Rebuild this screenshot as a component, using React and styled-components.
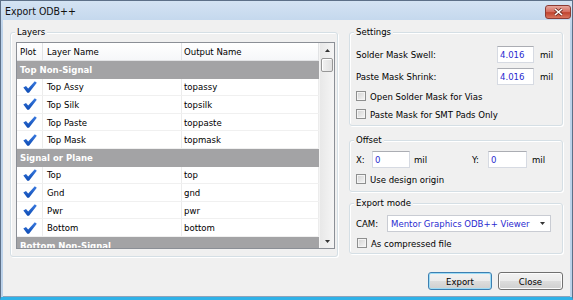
import React from 'react';
import styled, { createGlobalStyle } from 'styled-components';

const GlobalStyle = createGlobalStyle`
  html, body { margin: 0; padding: 0; background: #f0f0f0; }
  body {
    font-family: "DejaVu Sans Condensed", "Liberation Sans", sans-serif;
    font-size: 9.5px;
    color: #000;
  }
  #root { width: 573px; height: 300px; }
`;

const Window = styled.div`
  box-sizing: border-box;
  width: 573px;
  height: 300px;
  display: flex;
  flex-direction: column;
  background: linear-gradient(#d4e3f3, #bcd2ea 30px);
  border: 1px solid #5d7088;
  border-bottom: 3px solid #2fb2e8;
  overflow: hidden;
`;

const TitleBar = styled.div`
  height: 19px;
  display: flex;
  align-items: center;
  justify-content: space-between;
  padding: 0 1px 0 4px;
  flex-shrink: 0;
`;

const Title = styled.span`
  font-family: "DejaVu Sans Condensed", "Liberation Sans", sans-serif;
  font-size: 10.5px;
  color: #111;
`;

const CloseBtn = styled.div`
  width: 26px;
  height: 14px;
  margin-top: 2px;
  box-sizing: border-box;
  border: 1px solid #8c3b34;
  border-radius: 3px;
  background: linear-gradient(#e6a79e, #d46a5c 50%, #c0432f 55%, #d9755f);
  display: flex;
  align-items: center;
  justify-content: center;
`;

const Client = styled.div`
  flex: 1;
  margin: 0 2px;
  background: #f0f0f0;
  border-bottom: 1px solid #8fa3ba;
  display: flex;
  flex-direction: column;
  padding: 12px 7px 0 7px;
`;

const Main = styled.div`
  display: flex;
  gap: 11px;
`;

const RightColumn = styled.div`
  width: 214px;
  display: flex;
  flex-direction: column;
`;

const GroupBox = styled.div`
  position: relative;
  box-sizing: border-box;
  border: 1px solid #d5dfe5;
  border-radius: 3px;
  box-shadow: inset 1px 1px 0 #fff, 1px 1px 0 #fff;
  width: ${p => p.$w || 'auto'};
  height: ${p => p.$h || 'auto'};
  margin-top: ${p => p.$mt || 0}px;
  padding: ${p => p.$pad || '0'};
`;

const Caption = styled.span`
  position: absolute;
  top: -7px;
  left: 4px;
  padding: 0 2px;
  line-height: 12px;
  background: #f0f0f0;
`;

/* list view */
const List = styled.div`
  box-sizing: border-box;
  height: 100%;
  display: flex;
  border: 1px solid #8b8f96;
  background: #fff;
`;

const ListBody = styled.div`
  flex: 1;
  overflow: hidden;
`;

const cols = '26px 139px 1fr';

const HeaderRow = styled.div`
  display: grid;
  grid-template-columns: ${cols};
  height: 17px;
  background: linear-gradient(#ffffff, #f6f7f9);
  border-bottom: 1px solid #e2e3e5;
`;

const HeaderCell = styled.div`
  padding-left: ${p => p.$pl || 3}px;
  line-height: 17px;
  border-right: 1px solid #e2e3e5;
  white-space: nowrap;
`;

const GroupRow = styled.div`
  height: 17.6px;
  line-height: 17.6px;
  padding-left: 3px;
  background: #a3a3a5;
  color: #fff;
  font-weight: bold;
  white-space: nowrap;
`;

const DataRow = styled.div`
  display: grid;
  grid-template-columns: ${cols};
  height: 17.6px;
  box-sizing: border-box;
  border-bottom: 1px solid #f0f0f0;
`;

const Cell = styled.div`
  display: flex;
  align-items: center;
  justify-content: ${p => (p.$center ? 'center' : 'flex-start')};
  padding-left: ${p => (p.$center ? 0 : p.$pl || 3)}px;
  border-right: 1px solid #ececec;
  white-space: nowrap;
`;

const ScrollBar = styled.div`
  width: 14px;
  display: flex;
  flex-direction: column;
  background: linear-gradient(90deg, #e8e8e8, #f5f5f5);
  border-left: 1px solid #f4f4f4;
`;

const ScrollArrow = styled.div`
  height: 14px;
  display: flex;
  align-items: center;
  justify-content: center;
`;

const Thumb = styled.div`
  height: 14px;
  margin: 1px 1px 0;
  box-sizing: border-box;
  border: 1px solid #979797;
  border-radius: 2px;
  background: linear-gradient(90deg, #f2f2f2, #e1e1e1);
  box-shadow: inset 1px 1px 0 #fff;
`;

const Track = styled.div`
  flex: 1;
`;

/* settings */
const FieldRow = styled.div`
  display: flex;
  align-items: center;
  height: ${p => p.$h || 22}px;
`;

const Label = styled.span`
  width: ${p => p.$w}px;
  flex-shrink: 0;
  white-space: nowrap;
`;

const TextBox = styled.input`
  box-sizing: border-box;
  width: ${p => p.$w}px;
  height: 17px;
  margin: 0;
  padding: 0 2px;
  font: inherit;
  color: #2a2ad0;
  background: #fff;
  border: 1px solid #d6dae2;
  border-top-color: #abadb3;
  outline: none;
`;

const Unit = styled.span`
  margin-left: ${p => p.$ml || 6}px;
  width: ${p => p.$w || 'auto'};
  flex-shrink: 0;
`;

const CheckRow = styled.div`
  display: flex;
  align-items: center;
  gap: 4px;
  height: 18px;
  padding-left: ${p => p.$pl || 0}px;
`;

const CheckBox = styled.span`
  width: 10px;
  height: 10px;
  box-sizing: border-box;
  border: 1px solid #8e8f8f;
  background: linear-gradient(135deg, #d2d2d2, #f6f6f6);
  box-shadow: inset 0 0 0 1px #f4f4f4;
`;

const Select = styled.div`
  box-sizing: border-box;
  width: 164px;
  height: 17px;
  display: flex;
  align-items: center;
  justify-content: space-between;
  padding: 0 5px 0 3px;
  background: #fff;
  border: 1px solid #c9ccd3;
  color: #2a2ad0;
`;

const Footer = styled.div`
  display: flex;
  justify-content: flex-end;
  gap: 6px;
  margin-top: 15px;
`;

const Button = styled.div`
  box-sizing: border-box;
  width: ${p => p.$w}px;
  height: 18px;
  display: flex;
  align-items: center;
  justify-content: center;
  border: 1px solid ${p => (p.$default ? '#3c7fb1' : '#707070')};
  border-radius: 3px;
  background: linear-gradient(#f2f2f2, #ebebeb 50%, #dddddd 50%, #cfcfcf);
  box-shadow: inset 0 0 0 1px ${p => (p.$default ? '#9ddcf6' : '#fcfcfc')};
`;

const Check = () => (
  <svg width="14" height="12" viewBox="0 0 14 12">
    <defs>
      <linearGradient id="ck" x1="0" y1="0" x2="0" y2="1">
        <stop offset="0" stopColor="#3b7be0" />
        <stop offset="1" stopColor="#0d4bb4" />
      </linearGradient>
    </defs>
    <path d="M0.3 6.5 L3 4.9 L5.2 7.6 L11.8 0.2 L13.8 1.8 L6 11.8 L4.3 11.8 Z" fill="url(#ck)" />
  </svg>
);

const Arrow = ({ down }) => (
  <svg width="5" height="3" viewBox="0 0 5 3">
    <path d={down ? 'M0 0 H5 L2.5 3 Z' : 'M0 3 H5 L2.5 0 Z'} fill="#333" />
  </svg>
);

const groups = [
  {
    name: 'Top Non-Signal',
    layers: [
      ['Top Assy', 'topassy'],
      ['Top Silk', 'topsilk'],
      ['Top Paste', 'toppaste'],
      ['Top Mask', 'topmask'],
    ],
  },
  {
    name: 'Signal or Plane',
    layers: [
      ['Top', 'top'],
      ['Gnd', 'gnd'],
      ['Pwr', 'pwr'],
      ['Bottom', 'bottom'],
    ],
  },
  { name: 'Bottom Non-Signal', layers: [] },
];

export default function App() {
  return (
    <>
      <GlobalStyle />
      <Window>
        <TitleBar>
          <Title>Export ODB++</Title>
          <CloseBtn>
            <svg width="9" height="8" viewBox="0 0 9 8">
              <path d="M1 1 L8 7 M8 1 L1 7" stroke="#6b2a22" strokeWidth="3" />
              <path d="M1 1 L8 7 M8 1 L1 7" stroke="#fff" strokeWidth="1.6" />
            </svg>
          </CloseBtn>
        </TitleBar>
        <Client>
          <Main>
            <GroupBox $w="328px" $h="225px" $pad="9px 2px 7px 5px">
              <Caption>Layers</Caption>
              <List>
                <ListBody>
                  <HeaderRow>
                    <HeaderCell>Plot</HeaderCell>
                    <HeaderCell $pl={4}>Layer Name</HeaderCell>
                    <HeaderCell $pl={2}>Output Name</HeaderCell>
                  </HeaderRow>
                  {groups.map(g => (
                    <React.Fragment key={g.name}>
                      <GroupRow>{g.name}</GroupRow>
                      {g.layers.map(([name, out]) => (
                        <DataRow key={name}>
                          <Cell $center><Check /></Cell>
                          <Cell $pl={4}>{name}</Cell>
                          <Cell $pl={2}>{out}</Cell>
                        </DataRow>
                      ))}
                    </React.Fragment>
                  ))}
                </ListBody>
                <ScrollBar>
                  <ScrollArrow><Arrow /></ScrollArrow>
                  <Thumb />
                  <Track />
                  <ScrollArrow><Arrow down /></ScrollArrow>
                </ScrollBar>
              </List>
            </GroupBox>

            <RightColumn>
              <GroupBox $pad="10px 0 2px 6px">
                <Caption>Settings</Caption>
                <FieldRow>
                  <Label $w={141}>Solder Mask Swell:</Label>
                  <TextBox $w={37} readOnly value="4.016" />
                  <Unit>mil</Unit>
                </FieldRow>
                <FieldRow>
                  <Label $w={141}>Paste Mask Shrink:</Label>
                  <TextBox $w={37} readOnly value="4.016" />
                  <Unit>mil</Unit>
                </FieldRow>
                <CheckRow>
                  <CheckBox />
                  <span>Open Solder Mask for Vias</span>
                </CheckRow>
                <CheckRow>
                  <CheckBox />
                  <span>Paste Mask for SMT Pads Only</span>
                </CheckRow>
              </GroupBox>

              <GroupBox $mt={14} $pad="8px 0 3px 6px">
                <Caption>Offset</Caption>
                <FieldRow $h={21}>
                  <Label $w={16}>X:</Label>
                  <TextBox $w={38} readOnly value="0" />
                  <Unit $ml={4} $w="58px">mil</Unit>
                  <Label $w={16}>Y:</Label>
                  <TextBox $w={39} readOnly value="0" />
                  <Unit $ml={5}>mil</Unit>
                </FieldRow>
                <CheckRow>
                  <CheckBox />
                  <span>Use design origin</span>
                </CheckRow>
              </GroupBox>

              <GroupBox $mt={11} $pad="8px 0 1px 6px">
                <Caption>Export mode</Caption>
                <FieldRow>
                  <Label $w={31}>CAM:</Label>
                  <Select>
                    <span>Mentor Graphics ODB++ Viewer</span>
                    <Arrow down />
                  </Select>
                </FieldRow>
                <CheckRow $pl={1}>
                  <CheckBox />
                  <span>As compressed file</span>
                </CheckRow>
              </GroupBox>
            </RightColumn>
          </Main>

          <Footer>
            <Button $w={64} $default>Export</Button>
            <Button $w={65}>Close</Button>
          </Footer>
        </Client>
      </Window>
    </>
  );
}
